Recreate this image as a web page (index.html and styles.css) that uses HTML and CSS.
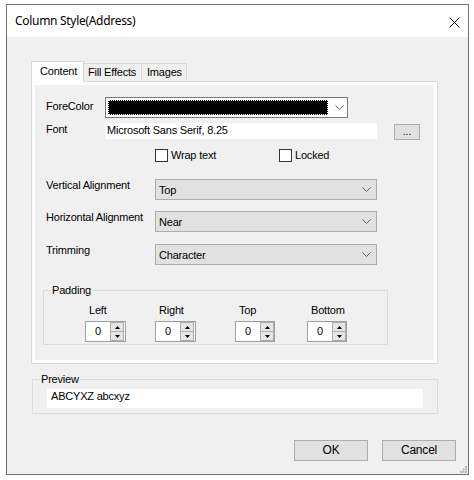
FILE: index.html
```html
<!DOCTYPE html>
<html>
<head>
<meta charset="utf-8">
<title>Column Style(Address)</title>
<link rel="stylesheet" href="styles.css">
</head>
<body>
<div class="window">
  <div class="titlebar">
    <span class="title">Column Style(Address)</span>
    <svg class="close" width="11" height="11" viewBox="0 0 11 11"><path d="M0.5 0.5L10.5 10.5M10.5 0.5L0.5 10.5" stroke="#000" stroke-width="1"/></svg>
  </div>
  <div class="client">
    <div class="tabctl">
      <div class="tabs">
        <div class="tab sel">Content</div>
        <div class="tab tab-fill">Fill Effects</div>
        <div class="tab tab-img">Images</div>
      </div>
      <div class="tabframe">
        <div class="page">
          <div class="row r-fore">
            <span class="lbl lbl-short lbl-fore">ForeColor</span>
            <div class="colorcombo">
              <div class="swatch"></div>
              <svg class="chev" width="9" height="5" viewBox="0 0 9 5"><path d="M0.5 0.5L4.5 4.5L8.5 0.5" fill="none" stroke="#606060" stroke-width="1"/></svg>
            </div>
          </div>
          <div class="row r-font">
            <span class="lbl lbl-short">Font</span>
            <div class="fontbox">Microsoft Sans Serif, 8.25</div>
            <div class="btn-dots">...</div>
          </div>
          <div class="row r-checks">
            <div class="chk chk-wrap"><span class="box"></span><span>Wrap text</span></div>
            <div class="chk"><span class="box"></span><span>Locked</span></div>
          </div>
          <div class="row r-combo r-c1">
            <span class="lbl lbl-long">Vertical Alignment</span>
            <div class="combo"><span>Top</span>
              <svg class="chev" width="9" height="5" viewBox="0 0 9 5"><path d="M0.5 0.5L4.5 4.5L8.5 0.5" fill="none" stroke="#606060" stroke-width="1"/></svg>
            </div>
          </div>
          <div class="row r-combo r-c2">
            <span class="lbl lbl-long">Horizontal Alignment</span>
            <div class="combo"><span>Near</span>
              <svg class="chev" width="9" height="5" viewBox="0 0 9 5"><path d="M0.5 0.5L4.5 4.5L8.5 0.5" fill="none" stroke="#606060" stroke-width="1"/></svg>
            </div>
          </div>
          <div class="row r-combo r-c3">
            <span class="lbl lbl-long">Trimming</span>
            <div class="combo"><span>Character</span>
              <svg class="chev" width="9" height="5" viewBox="0 0 9 5"><path d="M0.5 0.5L4.5 4.5L8.5 0.5" fill="none" stroke="#606060" stroke-width="1"/></svg>
            </div>
          </div>
          <div class="group padgroup">
            <span class="legend pad-legend">Padding</span>
            <div class="padgrid">
              <span class="plbl">Left</span>
              <span class="plbl">Right</span>
              <span class="plbl">Top</span>
              <span class="plbl">Bottom</span>
              <div class="spin"><span class="spinval">0</span><div class="spinbtns"><div class="sb sb-up"><svg width="5" height="3" viewBox="0 0 5 3"><path d="M2.5 0L5 3H0Z" fill="#000"/></svg></div><div class="sb"><svg width="5" height="3" viewBox="0 0 5 3"><path d="M0 0H5L2.5 3Z" fill="#000"/></svg></div></div></div>
              <div class="spin"><span class="spinval">0</span><div class="spinbtns"><div class="sb sb-up"><svg width="5" height="3" viewBox="0 0 5 3"><path d="M2.5 0L5 3H0Z" fill="#000"/></svg></div><div class="sb"><svg width="5" height="3" viewBox="0 0 5 3"><path d="M0 0H5L2.5 3Z" fill="#000"/></svg></div></div></div>
              <div class="spin"><span class="spinval">0</span><div class="spinbtns"><div class="sb sb-up"><svg width="5" height="3" viewBox="0 0 5 3"><path d="M2.5 0L5 3H0Z" fill="#000"/></svg></div><div class="sb"><svg width="5" height="3" viewBox="0 0 5 3"><path d="M0 0H5L2.5 3Z" fill="#000"/></svg></div></div></div>
              <div class="spin"><span class="spinval">0</span><div class="spinbtns"><div class="sb sb-up"><svg width="5" height="3" viewBox="0 0 5 3"><path d="M2.5 0L5 3H0Z" fill="#000"/></svg></div><div class="sb"><svg width="5" height="3" viewBox="0 0 5 3"><path d="M0 0H5L2.5 3Z" fill="#000"/></svg></div></div></div>
            </div>
          </div>
        </div>
      </div>
    </div>
    <div class="group previewgroup">
      <span class="legend prev-legend">Preview</span>
      <div class="previewbox">ABCYXZ abcxyz</div>
    </div>
    <div class="buttons">
      <div class="btn">OK</div>
      <div class="btn">Cancel</div>
    </div>
    <svg class="grip" width="7" height="7" viewBox="0 0 7 7"><g fill="#b8b8b8"><rect x="5" y="0" width="2" height="2"/><rect x="2.5" y="2.5" width="2" height="2"/><rect x="5" y="2.5" width="2" height="2"/><rect x="0" y="5" width="2" height="2"/><rect x="2.5" y="5" width="2" height="2"/><rect x="5" y="5" width="2" height="2"/></g></svg>
  </div>
</div>
</body>
</html>
```

FILE: styles.css
```css
* { box-sizing: border-box; }
html, body { margin: 0; padding: 0; background: #ffffff; }
body {
  font-family: "Liberation Sans", Arial, sans-serif;
  font-size: 11px;
  letter-spacing: -0.2px;
  color: #000;
  line-height: 13px;
}
.window {
  margin: 4px 0 0 6px;
  width: 463px;
  height: 471px;
  border: 1px solid #707070;
  display: flex;
  flex-direction: column;
  background: #f0f0f0;
}
.titlebar {
  height: 32px;
  background: #ffffff;
  display: flex;
  align-items: center;
  justify-content: space-between;
  padding: 0 8px 0 8px;
  flex: none;
}
.title {
  font-family: "Noto Sans", "Open Sans", sans-serif;
  font-size: 12px;
  letter-spacing: -0.3px;
  line-height: 16px;
}
.close { display: block; margin-top: 2px; margin-right: 0; }
.client {
  flex: 1;
  display: flex;
  flex-direction: column;
  position: relative;
}
.tabctl {
  margin: 24px 0 0 24px;
  width: 407px;
}
.tabs {
  display: flex;
  align-items: flex-end;
  height: 21px;
  margin-bottom: -1px;
}
.tab {
  height: 19px;
  border: 1px solid #d9d9d9;
  border-left: none;
  background: #f0f0f0;
  padding: 0 0 0 6px;
  line-height: 17px;
}
.tab.sel {
  height: 21px;
  border: 1px solid #d9d9d9;
  border-bottom: none;
  background: #ffffff;
  position: relative;
  z-index: 1;
  width: 53px;
  padding: 3px 0 0 8px;
  line-height: 13px;
}
.tab-fill { width: 58px; padding-left: 4px; }
.tab-img { width: 45px; padding-left: 5px; }
.tabframe {
  border: 1px solid #d9d9d9;
  background: #ffffff;
  padding: 3px;
  height: 283px;
}
.page {
  background: #f0f0f0;
  height: 275px;
  padding: 12px 0 0 8px;
  display: flex;
  flex-direction: column;
}
.row { display: flex; align-items: flex-start; margin-left: 3px; }
.lbl { flex: none; }
.lbl-short { width: 59px; }
.lbl-long { width: 109px; padding-top: 0; }
.lbl-fore { padding-top: 3px; }
.r-fore { height: 21px; }
.colorcombo {
  width: 243px;
  height: 21px;
  border: 1px solid #7a7a7a;
  background: #ffffff;
  display: flex;
  align-items: center;
  padding-left: 2px;
}
.swatch {
  width: 220px;
  height: 15px;
  background: #000000;
  border: 1px dotted #ffffff;
}
.colorcombo .chev { margin-left: 7px; }
.r-font { margin-top: 5px; height: 16px; }
.fontbox {
  width: 272px;
  height: 16px;
  background: #ffffff;
  padding: 1px 0 0 2px;
  white-space: nowrap;
}
.btn-dots {
  margin: 1px 0 0 17px;
  width: 26px;
  height: 16px;
  border: 1px solid #adadad;
  background: #e1e1e1;
  text-align: center;
  line-height: 14px;
  font-size: 10px;
  letter-spacing: 0;
}
.r-checks { margin-top: 10px; height: 13px; padding-left: 109px; }
.chk { display: flex; align-items: center; }
.chk-wrap { width: 124px; }
.box {
  width: 13px;
  height: 13px;
  border: 1px solid #333333;
  background: #ffffff;
  margin-right: 3px;
  flex: none;
}
.r-combo { height: 21px; }
.r-c1 { margin-top: 17px; }
.r-c2 { margin-top: 11px; }
.r-c3 { margin-top: 12px; }
.combo {
  width: 222px;
  height: 21px;
  border: 1px solid #adadad;
  background: #e1e1e1;
  display: flex;
  align-items: center;
  justify-content: space-between;
  padding: 1px 5px 0 3px;
}
.combo .chev { margin-top: -1px; }
.group {
  position: relative;
  border: 1px solid #dcdcdc;
}
.legend {
  position: absolute;
  top: -7px;
  background: #f0f0f0;
  padding: 0 1px;
}
.padgroup {
  margin-top: 25px;
  width: 345px;
  height: 55px;
  padding: 13px 0 0 41px;
}
.pad-legend { left: 7px; }
.padgrid {
  display: grid;
  grid-template-columns: 70px 80px 72px 41px;
  grid-template-rows: 17px 21px;
}
.plbl { padding-left: 4px; }
.spin {
  width: 41px;
  height: 21px;
  border: 1px solid #a0a0a0;
  background: #ffffff;
  display: flex;
  align-items: flex-start;
  padding: 0 0 0 9px;
}
.spin:nth-child(7), .spin:nth-child(8) { width: 40px; }
.spinval { width: 15px; padding-top: 3px; }
.spinbtns {
  margin-top: 0;
  width: 14px;
  height: 19px;
  display: flex;
  flex-direction: column;
}
.sb {
  height: 9px;
  flex: none;
  border: 1px solid #adadad;
  background: #e5e5e5;
  display: flex;
  align-items: center;
  justify-content: center;
}
.sb-up { height: 10px; border-bottom: 1px solid #adadad; }
.sb + .sb { border-top: none; }
.sb svg { display: block; }
.previewgroup {
  margin: 15px 0 0 25px;
  width: 406px;
  height: 35px;
  padding: 9px 0 0 14px;
}
.prev-legend { left: 7px; }
.previewbox {
  width: 376px;
  height: 19px;
  background: #ffffff;
  padding: 1px 0 0 4px;
}
.buttons {
  margin-top: 26px;
  display: flex;
  justify-content: flex-end;
  gap: 14px;
  padding-right: 12px;
}
.btn {
  width: 74px;
  height: 21px;
  border: 1px solid #adadad;
  background: #e1e1e1;
  text-align: center;
  line-height: 19px;
  font-size: 12px;
}
.grip {
  position: absolute;
  right: 1px;
  bottom: 1px;
}
```
